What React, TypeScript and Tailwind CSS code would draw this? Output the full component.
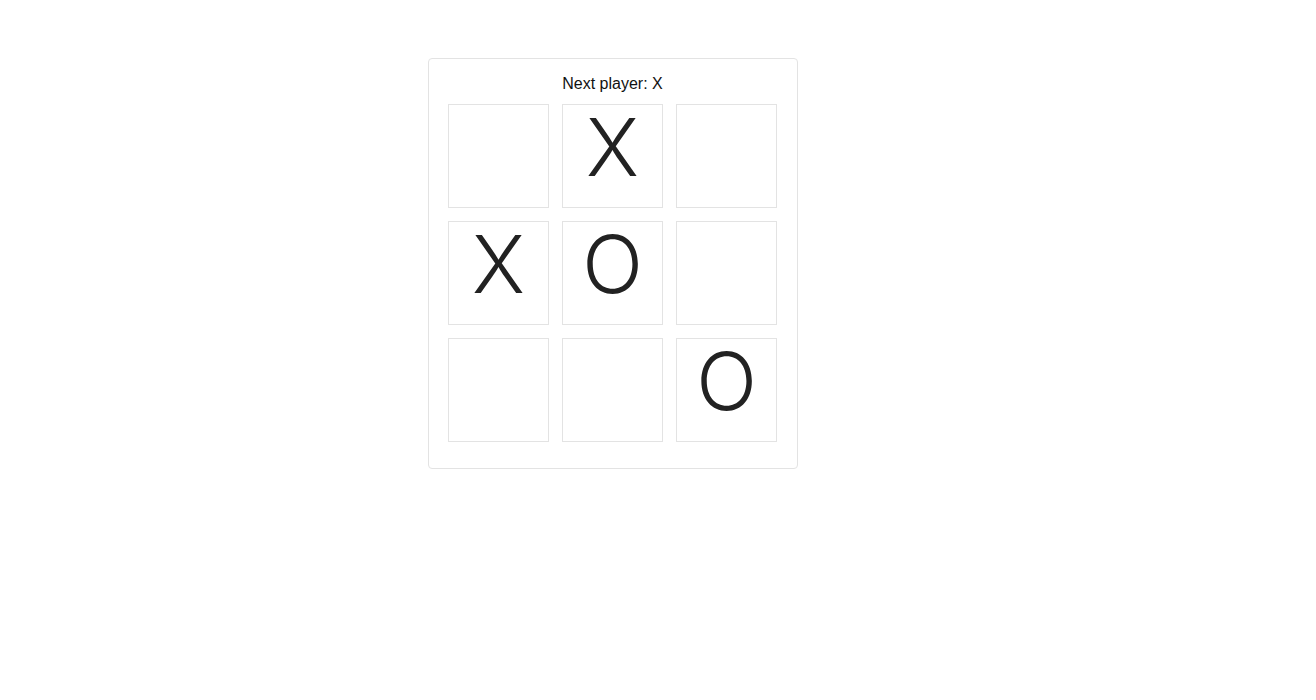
const squares: (string | null)[] = [null, "X", null, "X", "O", null, null, null, "O"];

function Square({ value }: { value: string | null }) {
  return (
    <button
      type="button"
      className="flex h-[104px] w-[101px] items-center justify-center border border-[#e3e3e3] bg-white pb-[18px] font-['Inter',sans-serif] text-[80px] font-light leading-none text-[#222]"
    >
      {value}
    </button>
  );
}

export default function App() {
  return (
    <div className="min-h-screen bg-white pl-[428px] pt-[58px]">
      <div className="w-[370px] rounded-[4px] border border-[#e3e3e3] bg-white pb-[26px] pl-[19px] pr-[20px] pt-[13px]">
        <div className="mb-[8px] text-center font-['Liberation_Sans',Arial,sans-serif] text-[16px] leading-6 text-[#111]">
          Next player: X
        </div>
        <div className="grid grid-cols-[101px_101px_101px] justify-between gap-y-[13px]">
          {squares.map((v, i) => (
            <Square key={i} value={v} />
          ))}
        </div>
      </div>
    </div>
  );
}
